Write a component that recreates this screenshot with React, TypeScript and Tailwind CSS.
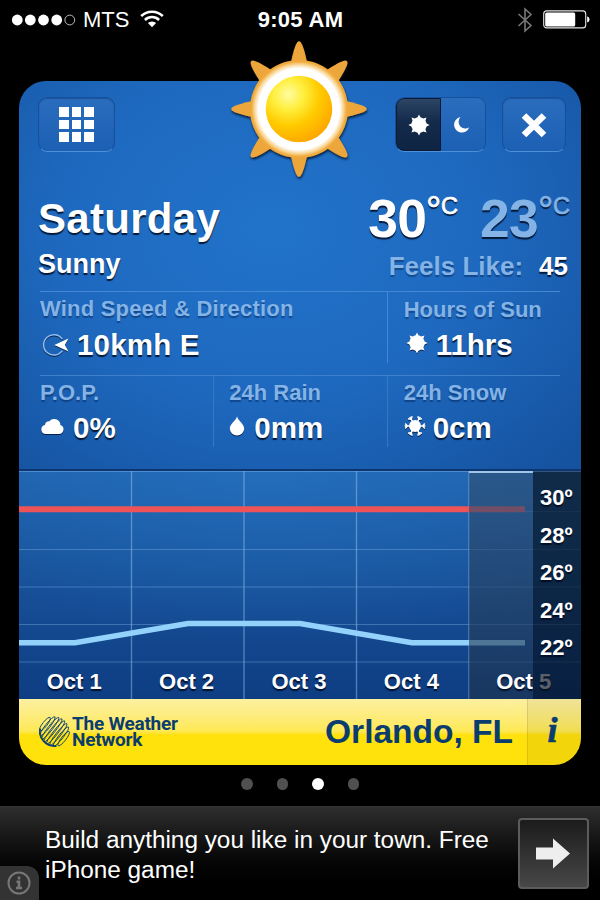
import type { ReactNode } from "react";

const DAYS = ["Oct 1", "Oct 2", "Oct 3", "Oct 4", "Oct 5"];
const SCALE = ["30º", "28º", "26º", "24º", "22º"];
const GRID_Y = [42.5, 80.5, 118, 155.5, 193];
const GRID_X = [112.5, 225, 337.5, 450];
const RAYS = [0, 45, 90, 135, 180, 225, 270, 315];

const SHADOW = "[text-shadow:0_2px_1px_rgba(0,10,30,0.85)]";
const SOFT_SHADOW = "[text-shadow:0_2px_1px_rgba(0,30,80,0.45)]";

function StatusBar() {
  return (
    <div className="grid h-10 grid-cols-3 items-center pl-3 pr-[11px] text-[22px] leading-none">
      <div className="flex items-center">
        <svg width="64" height="12" viewBox="0 0 64 12" className="shrink-0">
          {[5.3, 18.3, 31.5, 44.7].map((x) => (
            <circle key={x} cx={x} cy="6" r="5.4" fill="#fff" />
          ))}
          <circle cx="57.8" cy="6" r="4.9" fill="none" stroke="#ccc" strokeWidth="0.9" />
        </svg>
        <span className="ml-[7px] text-[22px]">MTS</span>
        <svg width="24" height="18" viewBox="0 0 24 18" className="mt-[-2px] ml-[11px]" fill="none" stroke="#fff">
          <path d="M1.2 6.2a15.2 15.2 0 0 1 21.6 0" strokeWidth="2.5" />
          <path d="M4.9 10a10 10 0 0 1 14.2 0" strokeWidth="2.5" />
          <path d="M12 17.3l-4.1-4.2a5.8 5.8 0 0 1 8.2 0z" fill="#fff" stroke="none" />
        </svg>
      </div>
      <div className="text-center text-[22px] font-bold tracking-[0.3px]">9:05 AM</div>
      <div className="flex items-center justify-end gap-[11px]">
        <svg width="16" height="26" viewBox="0 0 16 26" fill="none" stroke="#777" strokeWidth="1.6" className="mr-[-1px]">
          <path d="M1.5 7L14 18.5L8 24V2l6 5.5L1.5 19" />
        </svg>
        <svg width="47" height="19" viewBox="0 0 47 19" className="mt-[-2px] mr-[-1px]">
          <rect x="0.7" y="0.9" width="42" height="17" rx="3" fill="none" stroke="#e5e5e5" strokeWidth="1.1" />
          <rect x="2.2" y="2.4" width="30" height="14" rx="1.5" fill="#fff" />
          <path d="M44.2 6.2q2.3 1 2.3 3.2t-2.3 3.2z" fill="#fff" />
        </svg>
      </div>
    </div>
  );
}

function Sun() {
  return (
    <svg
      width="144"
      height="148"
      viewBox="-72 -72 144 148"
      className="absolute left-[208px] top-[-44px]"
    >
      <defs>
        <radialGradient id="orb" cx="0.34" cy="0.28" r="0.78">
          <stop offset="0" stopColor="#fffca0" />
          <stop offset="0.3" stopColor="#ffee3c" />
          <stop offset="0.6" stopColor="#ffcb00" />
          <stop offset="1" stopColor="#fea400" />
        </radialGradient>
        <radialGradient id="halo">
          <stop offset="0.83" stopColor="#fff" />
          <stop offset="0.91" stopColor="#f9d592" />
          <stop offset="0.97" stopColor="#f0a93a" />
        </radialGradient>
        <filter id="sunShadow" x="-10%" y="-10%" width="120%" height="125%">
          <feDropShadow dx="0.5" dy="2" stdDeviation="0.8" floodColor="#021530" floodOpacity="0.9" />
        </filter>
      </defs>
      <g filter="url(#sunShadow)">
        {RAYS.map((a) => (
          <path
            key={a}
            d="M-8.6 -44Q-4.8 -63 -1.6 -67Q0 -68.6 1.6 -67Q4.8 -63 8.6 -44Z"
            fill="#eda63a"
            transform={`rotate(${a})`}
          />
        ))}
        <circle r="49" fill="url(#halo)" />
      </g>
      <circle r="33.3" fill="url(#orb)" />
    </svg>
  );
}

function SunIcon({ className }: { className?: string }) {
  return (
    <svg width="22" height="22" viewBox="-11 -11 22 22" fill="#fff" className={className}>
      <circle r="7.7" />
      {RAYS.map((a) => (
        <path key={a} d="M-1.8 -7L0 -10.6L1.8 -7Z" transform={`rotate(${a})`} />
      ))}
    </svg>
  );
}

function SnowIcon() {
  return (
    <svg width="22" height="22" viewBox="-11 -11 22 22" fill="#fff" className="mt-[-3px]">
      <circle r="6" />
      {[30, 90, 150, 210, 270, 330].map((a) => (
        <path
          key={a}
          d="M0 -5V-10.4M-2.4 -9.8L0 -7.6L2.4 -9.8"
          stroke="#fff"
          strokeWidth="1.5"
          fill="none"
          transform={`rotate(${a})`}
        />
      ))}
    </svg>
  );
}

function WindIcon() {
  return (
    <svg width="28" height="24" viewBox="0 0 28 24" className="ml-[2px]">
      <path d="M20.3 6.2A10.2 10.2 0 1 0 20.3 17.6" fill="none" stroke="#8fbcec" strokeWidth="1.5" />
      <path d="M12.3 12L26.5 5.6L22.8 12L26.5 18.4Z" fill="#fff" />
    </svg>
  );
}

function CloudIcon() {
  return (
    <svg width="24" height="18" viewBox="0 0 24 18" fill="#fff" className="mt-[-3px] ml-px">
      <path d="M5 17a4.6 4.6 0 0 1-1-9.1A4.2 4.2 0 0 1 8.3 4.2a6.3 6.3 0 0 1 11.1 3.9A4.6 4.6 0 0 1 18.6 17Z" />
    </svg>
  );
}

function DropIcon() {
  return (
    <svg width="16" height="20" viewBox="0 0 16 20" fill="#fff" className="mt-[-3px]">
      <path d="M8 0.5C9.5 5 15.2 8.3 15.2 12.6A7.2 7 0 0 1 .8 12.6C.8 8.3 6.5 5 8 .5Z" />
    </svg>
  );
}

function GlassButton({ className, children }: { className: string; children: ReactNode }) {
  return (
    <div
      className={`flex h-[55px] items-center justify-center rounded-[9px] border border-[#15509d] border-b-[#4d8fd8] bg-linear-to-b from-[#2a6dbd] to-[#1c60b4] shadow-[inset_0_1px_1px_rgba(0,30,80,0.3)] ${className}`}
    >
      {children}
    </div>
  );
}

function Toolbar() {
  return (
    <div className="flex items-start pt-4 pl-[19px] pr-[15px]">
      <GlassButton className="w-[77px]">
        <div className="grid grid-cols-3 gap-[3px]">
          {Array.from({ length: 9 }, (_, i) => (
            <div key={i} className="size-[9.4px] bg-white" />
          ))}
        </div>
      </GlassButton>
      <div className="ml-auto flex h-[55px] w-[91px] overflow-hidden rounded-[9px] border border-[#15509d] border-b-[#4d8fd8] bg-linear-to-b from-[#2a6dbd] to-[#1c60b4]">
        <div className="flex w-[45px] items-center justify-center rounded-l-[8px] border border-[#071a38] bg-linear-to-b from-[#2d4565] via-[#132a4b] via-45% to-[#0e2442]">
          <SunIcon />
        </div>
        <div className="flex flex-1 items-center justify-center pr-[3px]">
          <svg width="17" height="18" viewBox="0 0 18 18" fill="#fff">
            <path d="M8 .5A8.3 8.3 0 1 0 17.2 11.5A7.2 7.2 0 0 1 8 .5Z" />
          </svg>
        </div>
      </div>
      <GlassButton className="ml-4 w-[64px]">
        <svg width="28" height="28" viewBox="0 0 28 28" stroke="#fff" strokeWidth="6.6">
          <path d="M4 4.5L24 24M24 4.5L4 24" />
        </svg>
      </GlassButton>
    </div>
  );
}

function Temp({ value, className }: { value: string; className: string }) {
  return (
    <div className={`flex items-start text-[53.5px] leading-none font-bold tracking-[-0.8px] ${className}`}>
      <span>{value}</span>
      <span className="ml-px flex font-normal tracking-normal [-webkit-text-stroke:0.7px_currentColor]">
        <span className="-ml-px w-[15px] text-[38px] leading-[36px]">°</span>
        <span className="mt-[3px] text-[23.5px]">C</span>
      </span>
    </div>
  );
}

function Stat({
  label,
  value,
  icon,
  className = "",
  labelClass = "h-[38px] pt-[6px]",
  gap = "gap-2",
}: {
  label: string;
  value: string;
  icon: ReactNode;
  className?: string;
  labelClass?: string;
  gap?: string;
}) {
  return (
    <div className={`h-[71px] ${className}`}>
      <div className={`text-[22px] leading-none font-bold whitespace-nowrap text-[#84b3e6] ${SOFT_SHADOW} ${labelClass}`}>
        {label}
      </div>
      <div className={`flex h-[29px] items-center text-[29.5px] leading-none font-bold ${SHADOW} ${gap}`}>
        <span className="drop-shadow-[0_1.5px_0.5px_rgba(0,10,30,0.7)]">{icon}</span>
        {value}
      </div>
    </div>
  );
}

function Conditions() {
  return (
    <div className="relative h-[388px] bg-[radial-gradient(ellipse_75%_85%_at_45%_38%,#2173ca_0%,#1e69bf_50%,#15529f_100%)]">
      <Toolbar />
      <div className="flex h-[139px] justify-between pr-[13px] pl-[19px]">
        <div>
          <div className={`pt-[46px] text-[42px] leading-none font-bold tracking-[0.3px] ${SHADOW}`}>Saturday</div>
          <div className={`pt-[11px] text-[27px] leading-none font-bold ${SHADOW}`}>Sunny</div>
        </div>
        <div>
          <div className="mr-[-2px] flex justify-end gap-[22px] pt-[40px]">
            <Temp value="30" className={SHADOW} />
            <Temp value="23" className={`text-[#84b3e6] ${SHADOW}`} />
          </div>
          <div className="flex justify-end gap-4 pt-[7px] text-[26px] leading-none font-bold">
            <span className={`text-[#84b3e6] ${SOFT_SHADOW}`}>Feels Like:</span>
            <span className={SHADOW}>45</span>
          </div>
        </div>
      </div>
      <div className="mx-[21px] grid h-[84px] grid-cols-3 items-start border-t border-[#4487d2]">
        <Stat
          className="col-span-2 tracking-[0.2px]"
          label="Wind Speed & Direction"
          value="10kmh E"
          icon={<WindIcon />}
          gap="gap-[7px]"
        />
        <Stat
          className="border-l border-[#4487d2] pl-4"
          labelClass="h-[38px] pt-[7px]"
          gap="gap-[8px]"
          label="Hours of Sun"
          value="11hrs"
          icon={<SunIcon className="mt-[-3px] ml-[2px]" />}
        />
      </div>
      <div className="mx-[21px] grid grid-cols-3 items-start border-t border-[#3f80ca]">
        <Stat label="P.O.P." value="0%" icon={<CloudIcon />} labelClass="h-[37px] pt-[6px]" gap="gap-[8px]" />
        <Stat
          className="border-l border-[#3877c2] pl-[15px]"
          label="24h Rain"
          value="0mm"
          icon={<DropIcon />}
          labelClass="h-[37px] pt-[6px]"
          gap="gap-[9px]"
        />
        <Stat
          className="border-l border-[#3877c2] pl-4"
          label="24h Snow"
          value="0cm"
          icon={<SnowIcon />}
          labelClass="h-[37px] pt-[6px]"
          gap="gap-[7px]"
        />
      </div>
    </div>
  );
}

function Chart() {
  return (
    <div className="relative h-[230px] overflow-hidden border-t-2 border-[#0d3670] bg-[radial-gradient(ellipse_65%_75%_at_45%_0%,rgba(38,120,200,0.5),transparent),linear-gradient(#2063ae,#0e3d82)]">
      <svg width="562" height="228" viewBox="0 2 562 228" className="absolute inset-0">
        <path d="M0 2.5H562" stroke="#4b8dd0" />
        <g stroke="#8fc0f0" strokeOpacity="0.35" strokeWidth="1.2">
          {GRID_Y.map((y) => (
            <path key={y} d={`M0 ${y}H562`} />
          ))}
        </g>
        <g stroke="#8fc0f0" strokeOpacity="0.5" strokeWidth="1.4">
          {GRID_X.map((x) => (
            <path key={x} d={`M${x} 2V230`} />
          ))}
        </g>
        <path d="M0 40.3H506" stroke="#ee5457" strokeWidth="6" />
        <path
          d="M0 173.8H56L169 154.6H281L393 173.8H506"
          fill="none"
          stroke="#93d2fb"
          strokeWidth="5.5"
        />
      </svg>
      <div className="absolute inset-y-0 left-[450px] w-[64px] border-t-2 border-[#9fc4e8] bg-linear-to-b from-[#2f5076]/65 to-[#1e324a]/60" />
      <div className={`absolute bottom-0 left-[-1px] flex h-[28px] text-[22px] leading-none font-bold ${SHADOW}`}>
        {DAYS.map((d) => (
          <div key={d} className="w-[112.4px] text-center">
            {d}
          </div>
        ))}
      </div>
      <div className="absolute inset-y-0 right-0 w-[48px] border-t border-[#34557c] bg-linear-to-b from-[#0c1c2e]/80 to-[#050f1e]/65" />
      <div className={`absolute inset-y-0 right-0 w-[48px] pt-[8px] pl-[7px] text-[22px] leading-[37.5px] font-bold ${SHADOW}`}>
        {SCALE.map((s) => (
          <div key={s}>{s}</div>
        ))}
      </div>
    </div>
  );
}

function Footer() {
  return (
    <div className="flex h-[66px] bg-linear-to-b from-[#fdf0a0] via-[#fee955] via-48% to-[#ffe10c] to-54% text-[#0a3d6e]">
      <div className="flex items-start pt-[17px] pl-[20px]">
        <svg width="31" height="31" viewBox="-16 -16 32 32" fill="none" stroke="#0e4272" strokeWidth="0.9">
          <g transform="rotate(-52)">
            {[-12.5, -9, -5.5, -2, 1.5, 5, 8.5, 12].map((y) => (
              <ellipse key={y} cx="0" cy={y} rx={Math.sqrt(230 - y * y)} ry="2.4" />
            ))}
          </g>
          <path d="M-14.8 -3A15 15 0 0 0 2 14.8" strokeWidth="2" />
        </svg>
        <div className="ml-[2px] font-['Roboto',sans-serif] text-[19px] font-bold tracking-[-0.25px]">
          <div className="h-4 leading-[15px]">The Weather</div>
          <div className="h-4 leading-[15px]">Network</div>
        </div>
      </div>
      <div className="mr-[14px] ml-auto pt-4 text-[33.5px] leading-none font-bold">Orlando, FL</div>
      <div className="flex w-[54px] items-start justify-center border-l border-black/10 bg-black/5 pt-[13px] pr-[4px] font-['Liberation_Serif',serif] text-[36px] leading-none font-bold italic [-webkit-text-stroke:0.7px_currentColor]">
        i
      </div>
    </div>
  );
}

function AdBanner() {
  return (
    <div className="relative flex h-[94px] items-start justify-between border-t border-[#333] bg-linear-to-b from-[#2e2e2e] to-black pr-[11px] pl-[45px]">
      <p className="pt-[18px] text-[24.35px] leading-[30px]">
        Build anything you like in your town. Free
        <br />
        iPhone game!
      </p>
      <div className="mt-[11px] flex size-[71px] items-center justify-center rounded-[4px] border-2 border-[#5c5c5c] bg-linear-to-b from-[#1c1c1c] to-[#484848]">
        <svg width="34" height="31" viewBox="0 0 34 31" fill="#eee" className="mr-[2px]">
          <path d="M0 9.5H17V.5L34 15.5L17 30.5V21.5H0Z" />
        </svg>
      </div>
      <div className="absolute bottom-0 left-0 flex h-[34px] w-[39px] items-center justify-center rounded-tr-[12px] bg-[#333]">
        <svg width="24" height="24" viewBox="0 0 24 24" fill="none" stroke="#777" className="mr-px">
          <circle cx="12" cy="12" r="10.5" strokeWidth="2" />
          <path d="M12 5.5v3M9.5 10.8H12V17M9 17h6" strokeWidth="2.6" />
        </svg>
      </div>
    </div>
  );
}

export default function App() {
  return (
    <div className="flex h-[900px] w-[600px] flex-col overflow-hidden bg-black font-['Liberation_Sans',Arial,sans-serif] text-white">
      <StatusBar />
      <div className="relative mx-[19px] mt-[41px]">
        <div className="overflow-hidden rounded-[27px]">
          <Conditions />
          <Chart />
          <Footer />
        </div>
        <Sun />
      </div>
      <div className="flex flex-1 items-center justify-center gap-6 pb-[3px]">
        <div className="size-[11.5px] rounded-full bg-[#505050]" />
        <div className="size-[11.5px] rounded-full bg-[#505050]" />
        <div className="size-[11.5px] rounded-full bg-white" />
        <div className="size-[11.5px] rounded-full bg-[#505050]" />
      </div>
      <AdBanner />
    </div>
  );
}
